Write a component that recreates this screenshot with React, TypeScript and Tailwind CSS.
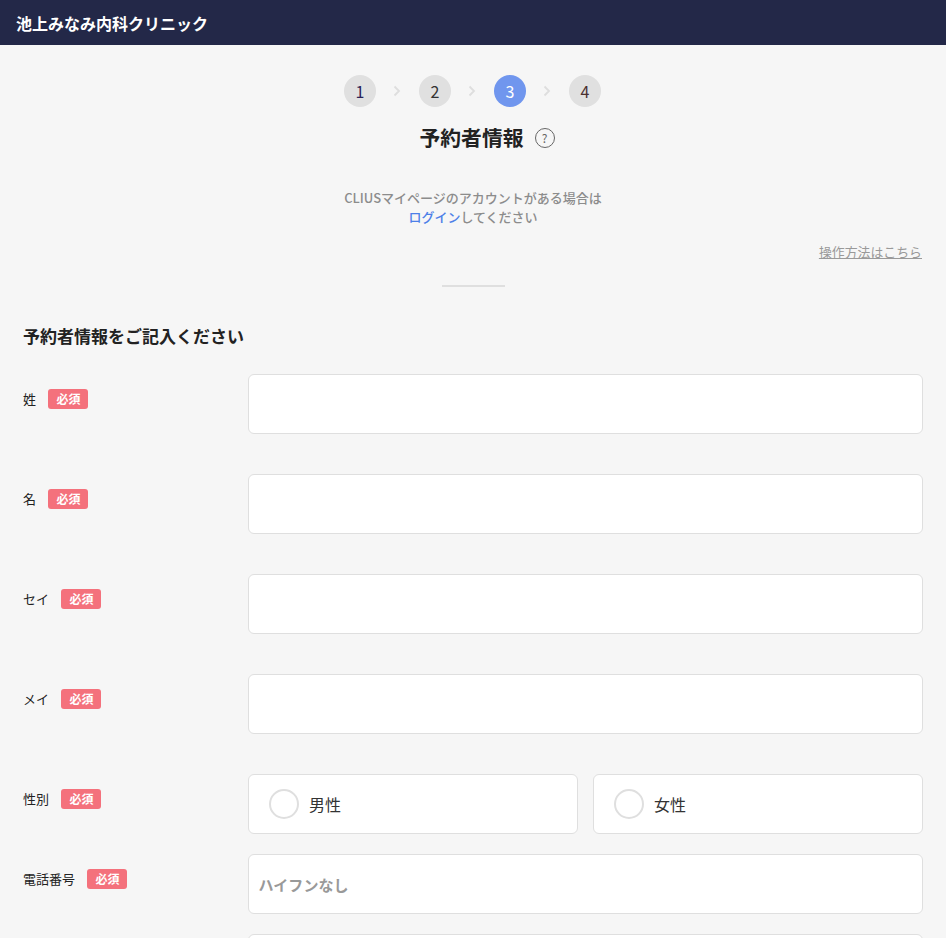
const font = { fontFamily: '"Noto Sans CJK JP", "Noto Sans", sans-serif' };

function Badge() {
  return <span className="ml-3 flex h-5 w-10 items-center justify-center rounded-[3px] bg-[#f4717c] pl-[1px] text-xs font-bold leading-none text-white">必須</span>;
}

function Field({ label, placeholder, mb = "mb-10" }: { label: string; placeholder?: string; mb?: string }) {
  return (
    <div className={`flex ${mb}`}>
      <div className="flex h-[50px] w-[225px] shrink-0 items-center text-[13px] text-[#222]">
        <span>{label}</span>
        <Badge />
      </div>
      <div className="flex h-[60px] flex-1 items-center rounded-md border border-[#dfdfdf] bg-white pl-[9.5px] pt-[2px] text-[15px] font-bold text-[#999]">
        {placeholder}
      </div>
    </div>
  );
}

function Radio({ label }: { label: string }) {
  return (
    <div className="flex h-[60px] flex-1 items-center rounded-md border border-[#dfdfdf] bg-white pl-5">
      <span className="h-[30px] w-[30px] rounded-full border-2 border-[#dfdfdf]" />
      <span className="ml-[10px] text-base text-[#333]">{label}</span>
    </div>
  );
}

function Step({ n, active, color }: { n: number; active?: boolean; color: string }) {
  return (
    <span className={`flex h-8 w-8 items-center justify-center rounded-full pl-[1px] text-base ${active ? "bg-[#7096ee] text-white" : "bg-[#e0e0e0]"} ${color}`}>{n}</span>
  );
}

function Chevron() {
  return (
    <svg width="8" height="12" viewBox="0 0 8 12" fill="none" className="mx-[17.5px]">
      <path d="M1.5 1.5 6 6l-4.5 4.5" stroke="#dedede" strokeWidth="1.8" />
    </svg>
  );
}

export default function App() {
  return (
    <div style={font} className="h-[938px] overflow-hidden bg-[#f6f6f6]">
      <header className="flex h-[45px] items-center bg-[#232848] px-4 text-base font-bold text-white">池上みなみ内科クリニック</header>
      <div className="flex items-center justify-center pt-[30px] pr-[2px]">
        <Step n={1} color="text-[#2b2358]" />
        <Chevron />
        <Step n={2} color="text-[#333]" />
        <Chevron />
        <Step n={3} active color="" />
        <Chevron />
        <Step n={4} color="text-[#4a3030]" />
      </div>
      <div className="mt-[15px] flex h-[32px] items-center justify-center pr-[3px]">
        <h1 className="relative text-[20.8px] font-bold text-[#222]">
          予約者情報
          <span className="absolute left-[115px] top-[6px] flex h-5 w-5 items-center justify-center rounded-full border border-[#666] text-xs font-normal leading-none text-[#666]">?</span>
        </h1>
      </div>
      <p className="mt-[34px] text-center text-[13px] font-medium leading-[19px] text-[#8c8c8c]">
        CLIUSマイページのアカウントがある場合は<br />
        <span className="text-[#4d7fe8]">ログイン</span>してください
      </p>
      <div className="mt-[16px] flex justify-end px-6 text-[12.9px] leading-5">
        <a className="text-[#999] underline">操作方法はこちら</a>
      </div>
      <div className="mx-auto mt-[23px] h-[2px] w-[63px] bg-[#dfdfdf]" />
      <main className="px-[23px]">
        <h2 className="mt-[36px] mb-[25px] h-[26px] text-[17px] font-bold leading-[26px] text-[#222]">予約者情報をご記入ください</h2>
        <Field label="姓" />
        <Field label="名" />
        <Field label="セイ" />
        <Field label="メイ" />
        <div className="mb-5 flex">
          <div className="flex h-[50px] w-[225px] shrink-0 items-center text-[13px] text-[#222]">
            <span>性別</span>
            <Badge />
          </div>
          <div className="flex flex-1 gap-[15px]">
            <Radio label="男性" />
            <Radio label="女性" />
          </div>
        </div>
        <Field label="電話番号" placeholder="ハイフンなし" mb="mb-5" />
        <div className="ml-[225px] h-[60px] rounded-md border border-[#dfdfdf] bg-white" />
      </main>
    </div>
  );
}
